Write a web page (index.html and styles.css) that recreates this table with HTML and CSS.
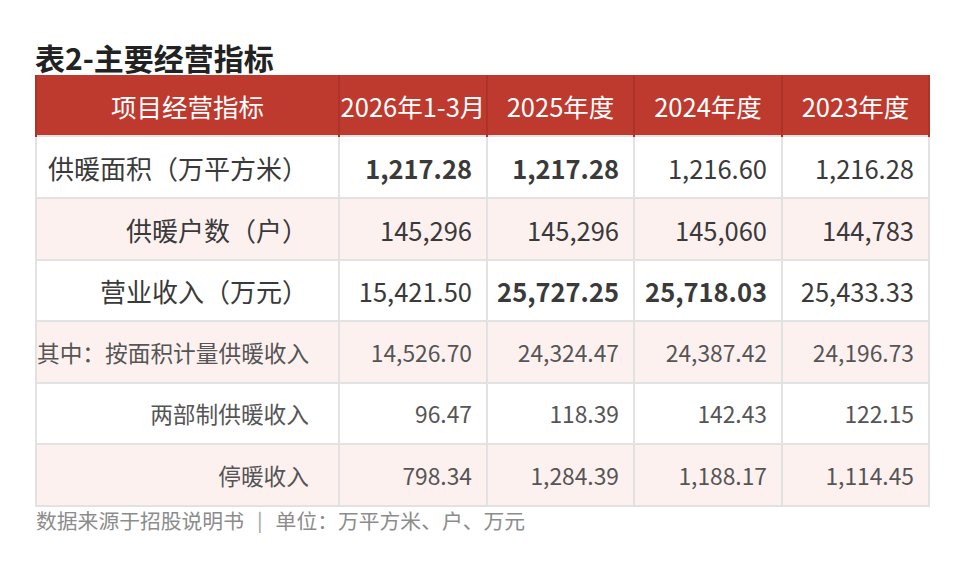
FILE: index.html
```html
<!DOCTYPE html>
<html lang="zh-CN">
<head>
<meta charset="utf-8">
<title>表2-主要经营指标</title>
<link rel="stylesheet" href="styles.css">
</head>
<body>
<div class="wrap">
  <h1 class="title">表2-主要经营指标</h1>
  <table class="grid">
    <colgroup>
      <col class="c-name"><col class="c-num"><col class="c-num2"><col class="c-num"><col class="c-num2">
    </colgroup>
    <thead>
      <tr>
        <th>项目经营指标</th>
        <th>2026年1-3月</th>
        <th>2025年度</th>
        <th>2024年度</th>
        <th>2023年度</th>
      </tr>
    </thead>
    <tbody>
      <tr class="main">
        <td class="name">供暖面积（万平方米）</td>
        <td class="b">1,217.28</td>
        <td class="b">1,217.28</td>
        <td>1,216.60</td>
        <td>1,216.28</td>
      </tr>
      <tr class="main alt">
        <td class="name">供暖户数（户）</td>
        <td>145,296</td>
        <td>145,296</td>
        <td>145,060</td>
        <td>144,783</td>
      </tr>
      <tr class="main short">
        <td class="name">营业收入（万元）</td>
        <td>15,421.50</td>
        <td class="b">25,727.25</td>
        <td class="b">25,718.03</td>
        <td>25,433.33</td>
      </tr>
      <tr class="sub alt">
        <td class="name">其中：按面积计量供暖收入</td>
        <td>14,526.70</td>
        <td>24,324.47</td>
        <td>24,387.42</td>
        <td>24,196.73</td>
      </tr>
      <tr class="sub short">
        <td class="name">两部制供暖收入</td>
        <td>96.47</td>
        <td>118.39</td>
        <td>142.43</td>
        <td>122.15</td>
      </tr>
      <tr class="sub alt">
        <td class="name">停暖收入</td>
        <td>798.34</td>
        <td>1,284.39</td>
        <td>1,188.17</td>
        <td>1,114.45</td>
      </tr>
    </tbody>
  </table>
  <p class="note">数据来源于招股说明书<span class="sep">|</span>单位：万平方米、户、万元</p>
</div>
</body>
</html>
```
FILE: styles.css
```css
html, body {
  margin: 0;
  padding: 0;
  background: #ffffff;
}

body {
  font-family: "Noto Sans CJK SC", "Noto Sans", sans-serif;
  color: #333333;
}

.wrap {
  padding: 39px 0 0 35px;
  width: 893px;
}

.title {
  margin: 0;
  font-size: 30px;
  line-height: 36px;
  font-weight: 700;
  color: #222222;
}

.grid {
  border-collapse: collapse;
  table-layout: fixed;
  width: 893px;
}

.c-name { width: 303px; }
.c-num { width: 148px; }
.c-num2 { width: 147px; }

.grid th {
  background: #be3a2e;
  color: #ffffff;
  font-weight: 400;
  font-size: 25.5px;
  height: 60px;
  padding: 0;
  text-align: center;
  white-space: nowrap;
  border-left: 2px solid #ad3328;
  border-right: 2px solid #ad3328;
}

.grid td {
  border: 2px solid #e2e2e2;
  text-align: right;
  padding: 0 14px 0 0;
  height: 60px;
  white-space: nowrap;
}

.grid tr.short td {
  height: 59px;
}

.grid tr.alt td {
  background: #fdf1f0;
}

.grid tr.main td {
  font-size: 25.5px;
  color: #3a3a3a;
}

.grid tr.main td.name {
  font-size: 26px;
  padding-right: 30px;
}

.grid tr.sub td {
  font-size: 22.8px;
  color: #555555;
}

.grid tr.sub td.name {
  font-size: 22.7px;
  padding-right: 29px;
}

.grid td.b {
  font-weight: 700;
  color: #333333;
}

.note {
  margin: 0 0 0 1px;
  font-size: 20.8px;
  line-height: 26px;
  color: #8c8c8c;
}

.sep {
  margin: 0 13px;
  color: #a0a0a0;
}
```
